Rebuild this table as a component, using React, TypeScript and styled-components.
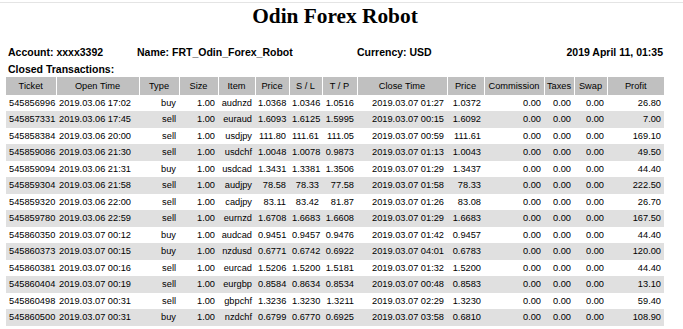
import React from 'react';
import styled, { createGlobalStyle } from 'styled-components';

const GlobalStyle = createGlobalStyle`
    html,
    body {
        margin: 0;
        padding: 0;
        background: #ffffff;
        color: #000000;
        font-family: 'Liberation Sans', Arial, sans-serif;
    }
`;

const TopRule = styled.div`
    height: 1px;
    margin-top: 2px;
    background: #e4e4e4;
`;

const Page = styled.div`
    width: 658px;
    margin-left: 6px;
`;

const Title = styled.h1`
    margin: 1px 0 0;
    font-family: 'Liberation Serif', 'Times New Roman', serif;
    font-size: 21.33px;
    font-weight: bold;
    line-height: 24px;
    text-align: center;
`;

const InfoRow = styled.div`
    display: grid;
    grid-template-columns: 129px 220px 1fr auto;
    margin-top: 17.5px;
    padding: 0 1px 0 2px;
    font-size: 10.5px;
    font-weight: bold;
    line-height: 13px;
`;

const SectionLabel = styled.div`
    margin-top: 4.5px;
    padding-left: 2px;
    font-size: 10.5px;
    font-weight: bold;
    line-height: 13px;
`;

const Table = styled.table`
    width: 658px;
    margin-top: 0.5px;
    border-collapse: collapse;
    table-layout: fixed;
    font-size: 9.25px;
`;

const HeadCell = styled.th`
    height: 18px;
    padding: 0;
    background: #c0c0c0;
    border-left: 1px solid #ffffff;
    font-weight: normal;
    text-align: center;
    white-space: nowrap;

    &:first-child {
        border-left: none;
    }
`;

const Row = styled.tr<{ $shaded: boolean }>`
    background: ${(p) => (p.$shaded ? '#e0e0e0' : '#ffffff')};
`;

const Cell = styled.td<{ $align: 'left' | 'right' }>`
    height: 16.5px;
    padding: 0 3px;
    text-align: ${(p) => p.$align};
    white-space: nowrap;
    overflow: hidden;
`;

type Column = { title: string; width: number; align: 'left' | 'right' };

const columns: Column[] = [
    { title: 'Ticket', width: 50, align: 'left' },
    { title: 'Open Time', width: 83, align: 'left' },
    { title: 'Type', width: 40, align: 'right' },
    { title: 'Size', width: 39, align: 'right' },
    { title: 'Item', width: 37, align: 'right' },
    { title: 'Price', width: 34, align: 'right' },
    { title: 'S / L', width: 33, align: 'right' },
    { title: 'T / P', width: 35, align: 'right' },
    { title: 'Close Time', width: 90, align: 'right' },
    { title: 'Price', width: 37, align: 'right' },
    { title: 'Commission', width: 60, align: 'right' },
    { title: 'Taxes', width: 30, align: 'right' },
    { title: 'Swap', width: 33, align: 'right' },
    { title: 'Profit', width: 57, align: 'right' },
];

// ticket, open, type, item, price, s/l, t/p, close, close price, profit
const trades: string[][] = [
    ['545856996', '2019.03.06 17:02', 'buy', 'audnzd', '1.0368', '1.0346', '1.0516', '2019.03.07 01:27', '1.0372', '26.80'],
    ['545857331', '2019.03.06 17:45', 'sell', 'euraud', '1.6093', '1.6125', '1.5995', '2019.03.07 00:15', '1.6092', '7.00'],
    ['545858384', '2019.03.06 20:00', 'sell', 'usdjpy', '111.80', '111.61', '111.05', '2019.03.07 00:59', '111.61', '169.10'],
    ['545859086', '2019.03.06 21:30', 'sell', 'usdchf', '1.0048', '1.0078', '0.9873', '2019.03.07 01:13', '1.0043', '49.50'],
    ['545859094', '2019.03.06 21:31', 'buy', 'usdcad', '1.3431', '1.3381', '1.3506', '2019.03.07 01:29', '1.3437', '44.40'],
    ['545859304', '2019.03.06 21:58', 'sell', 'audjpy', '78.58', '78.33', '77.58', '2019.03.07 01:58', '78.33', '222.50'],
    ['545859320', '2019.03.06 22:00', 'sell', 'cadjpy', '83.11', '83.42', '81.87', '2019.03.07 01:26', '83.08', '26.70'],
    ['545859780', '2019.03.06 22:59', 'sell', 'eurnzd', '1.6708', '1.6683', '1.6608', '2019.03.07 01:29', '1.6683', '167.50'],
    ['545860350', '2019.03.07 00:12', 'buy', 'audcad', '0.9451', '0.9457', '0.9476', '2019.03.07 01:42', '0.9457', '44.40'],
    ['545860373', '2019.03.07 00:15', 'buy', 'nzdusd', '0.6771', '0.6742', '0.6922', '2019.03.07 04:01', '0.6783', '120.00'],
    ['545860381', '2019.03.07 00:16', 'sell', 'eurcad', '1.5206', '1.5200', '1.5181', '2019.03.07 01:32', '1.5200', '44.40'],
    ['545860404', '2019.03.07 00:19', 'sell', 'eurgbp', '0.8584', '0.8634', '0.8534', '2019.03.07 00:48', '0.8583', '13.10'],
    ['545860498', '2019.03.07 00:31', 'sell', 'gbpchf', '1.3236', '1.3230', '1.3211', '2019.03.07 02:29', '1.3230', '59.40'],
    ['545860500', '2019.03.07 00:31', 'buy', 'nzdchf', '0.6799', '0.6770', '0.6925', '2019.03.07 03:58', '0.6810', '108.90'],
];

const toCells = (t: string[]): string[] => [
    t[0], t[1], t[2], '1.00', t[3], t[4], t[5], t[6], t[7], t[8], '0.00', '0.00', '0.00', t[9],
];

const App = (): JSX.Element => (
    <>
        <GlobalStyle />
        <TopRule />
        <Page>
            <Title>Odin Forex Robot</Title>
            <InfoRow>
                <span>Account: xxxx3392</span>
                <span>Name: FRT_Odin_Forex_Robot</span>
                <span>Currency: USD</span>
                <span>2019 April 11, 01:35</span>
            </InfoRow>
            <SectionLabel>Closed Transactions:</SectionLabel>
            <Table>
                <colgroup>
                    {columns.map((c, i) => (
                        <col key={i} style={{ width: c.width }} />
                    ))}
                </colgroup>
                <thead>
                    <tr>
                        {columns.map((c, i) => (
                            <HeadCell key={i}>{c.title}</HeadCell>
                        ))}
                    </tr>
                </thead>
                <tbody>
                    {trades.map((t, r) => (
                        <Row key={t[0]} $shaded={r % 2 === 1}>
                            {toCells(t).map((v, i) => (
                                <Cell key={i} $align={columns[i].align}>
                                    {v}
                                </Cell>
                            ))}
                        </Row>
                    ))}
                </tbody>
            </Table>
        </Page>
    </>
);

export default App;
